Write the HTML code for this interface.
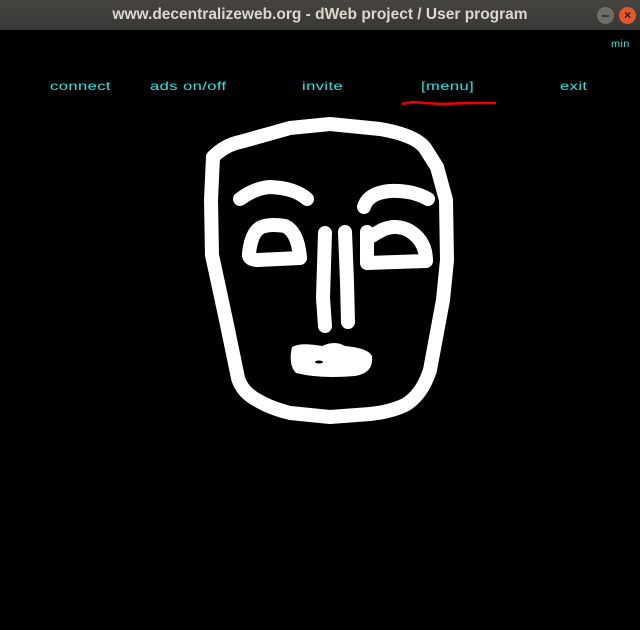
<!DOCTYPE html>
<html><head><style>
body{margin:0;width:640px;height:630px;background:#000;overflow:hidden;font-family:"Liberation Sans",sans-serif}
.tb{position:absolute;left:0;top:0;width:640px;height:30px;background:linear-gradient(#45443f,#393834);color:#dcd8cf;font-weight:bold;font-size:15.5px;text-align:center;line-height:30px}
.b{position:absolute;top:7px;width:17px;height:17px;border-radius:50%}
.m{position:absolute;color:#1ee8ea;font-size:12px;transform:scaleX(1.38);transform-origin:left top;letter-spacing:.3px}
</style></head><body>
<div class="tb">www.decentralizeweb.org - dWeb project / User program</div>
<div class="b" style="left:597px;background:#6e6d68"><div style="position:absolute;left:5px;top:8px;width:7px;height:1.5px;background:#3a3a38"></div></div>
<div class="b" style="left:619px;background:#e2572c;color:#3a1a10;font-size:12px;line-height:17px;text-align:center;font-weight:bold">×</div>
<div class="m" style="left:611px;top:39px;font-size:10px;transform:scaleX(1.1)">min</div>
<div class="m" style="left:50px;top:79px">connect</div>
<div class="m" style="left:150px;top:79px">ads on/off</div>
<div class="m" style="left:302px;top:79px">invite</div>
<div class="m" style="left:421px;top:79px">[menu]</div>
<div class="m" style="left:560px;top:79px">exit</div>
<svg width="640" height="630" style="position:absolute;left:0;top:0">
<path d="M402 104 L412 102 L440 104 L470 103 L496 103" stroke="#e00" stroke-width="2.5" fill="none"/>
<g stroke="#fff" stroke-width="14" fill="none" stroke-linecap="round" stroke-linejoin="round">
<path d="M213 157 Q225 145 240 142 L290 128 L330 124 L380 129 Q415 135 425 148 L437 167 L446 200 L447 260 L443 300 L430 370 Q422 395 405 405 Q390 412 370 414 L330 417 L290 413 Q270 408 257 400 Q242 392 238 378 L226 320 L212 255 L211 200 Z"/>
<path d="M240 199 Q255 188 270 187 Q295 188 307 199"/>
<path d="M364 207 Q368 193 390 191 Q412 190 428 199"/>
<path d="M249 253 Q252 228 265 226 Q272 224 285 226 Q298 232 300 258 L258 260 Q248 260 249 253 Z"/>
<path d="M367 232 L367 263 L426 261 Q426 240 408 230 Q395 224 382 230 L368 238"/>
<path d="M325 233 L323 298 L325 326"/>
<path d="M345 232 L347 282 L348 322"/>
</g>
<path d="M292 347 Q300 342 322 346 Q335 340 345 346 Q368 348 372 356 Q374 373 355 376 Q320 379 296 373 Q288 365 292 347 Z" fill="#fff"/>
<ellipse cx="319" cy="362" rx="4" ry="1.5" fill="#000"/>
</svg>
</body></html>
